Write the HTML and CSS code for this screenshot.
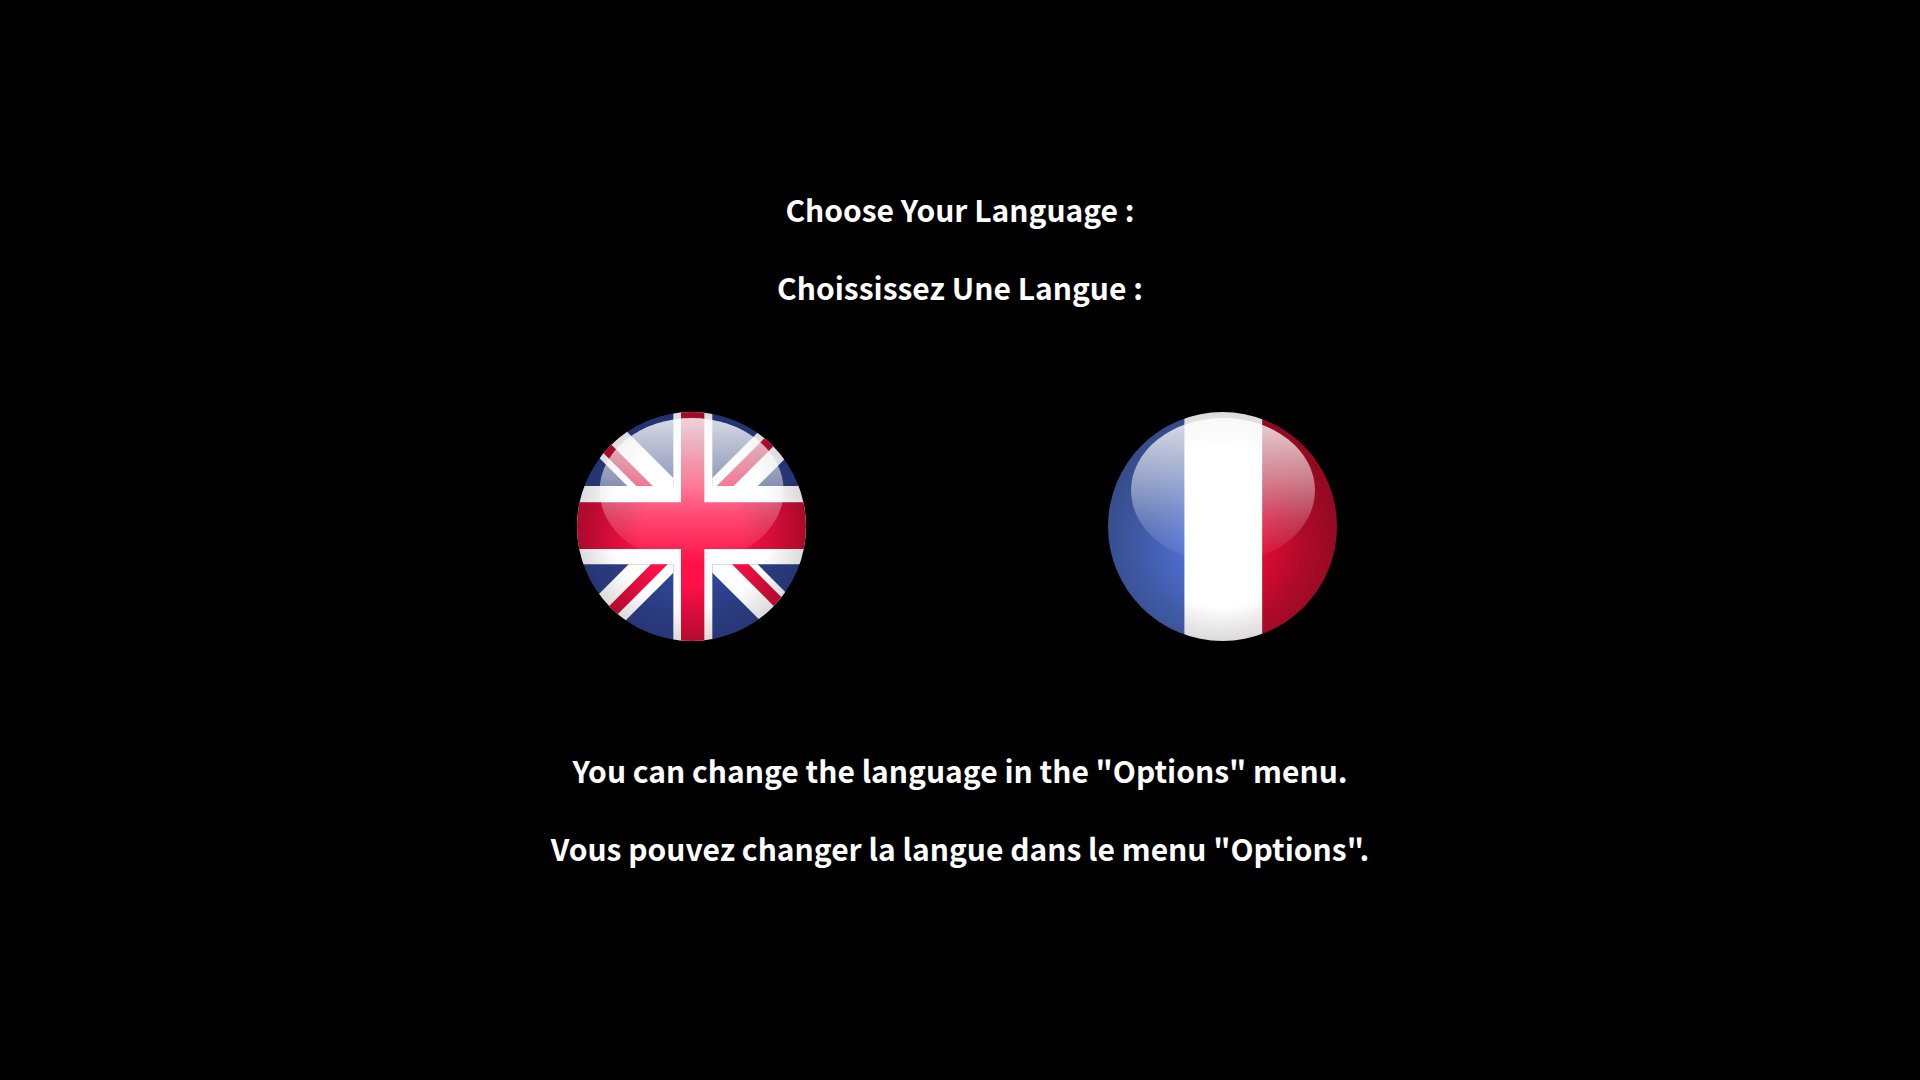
FILE: index.html
```html
<!DOCTYPE html>
<html lang="en">
<head>
<meta charset="utf-8">
<meta name="viewport" content="width=device-width, initial-scale=1">
<title>Choose Your Language</title>
<link rel="stylesheet" href="styles.css">
</head>
<body>
<main class="screen">
  <h1 class="lines">
    <span>Choose Your Language :</span>
    <span lang="fr">Choississez Une Langue :</span>
  </h1>

  <div class="flags">
    <button class="flag" type="button" aria-label="English">
      <svg viewBox="0 0 687 687" aria-hidden="true">
        <defs>
          <clipPath id="disc"><circle cx="343.5" cy="343.5" r="343.5"/></clipPath>
          <radialGradient id="uk-red" gradientUnits="userSpaceOnUse" cx="343" cy="370" r="370">
            <stop offset="0" stop-color="#ff1048"/>
            <stop offset=".4" stop-color="#ff1046"/>
            <stop offset=".7" stop-color="#cf0c38"/>
            <stop offset=".9" stop-color="#ae0a2d"/>
            <stop offset="1" stop-color="#a4092a"/>
          </radialGradient>
          <radialGradient id="uk-blue" gradientUnits="userSpaceOnUse" cx="343" cy="370" r="370">
            <stop offset="0" stop-color="#3450b0"/>
            <stop offset=".4" stop-color="#2f4597"/>
            <stop offset=".75" stop-color="#293979"/>
            <stop offset="1" stop-color="#253272"/>
          </radialGradient>
          <radialGradient id="white" gradientUnits="userSpaceOnUse" cx="343" cy="343" r="344">
            <stop offset="0" stop-color="#fff"/>
            <stop offset=".7" stop-color="#fff"/>
            <stop offset="1" stop-color="#dcdada"/>
          </radialGradient>
          <linearGradient id="gloss" x1="0" y1="0" x2="0" y2="1">
            <stop offset="0" stop-color="#fff" stop-opacity=".82"/>
            <stop offset=".4" stop-color="#fff" stop-opacity=".5"/>
            <stop offset=".7" stop-color="#fff" stop-opacity=".22"/>
            <stop offset="1" stop-color="#fff" stop-opacity=".01"/>
          </linearGradient>
        </defs>
        <g clip-path="url(#disc)">
          <path fill="url(#uk-blue)" d="M0 0H687V687H0z"/>
          <g fill="url(#white)">
            <path d="M289 198 89-2-71 0 151 222H289z"/>
            <path d="M406 198 606-2 764 0 542 222H406z"/>
            <path d="M155 457-67 679 89 682 289 482V457z"/>
            <path d="M542 457 764 679 606 682 406 482V457z"/>
            <path d="M289 0H406V222H687V457H406V687H289V457H0V222H289z"/>
          </g>
          <g fill="url(#uk-red)">
            <path d="M227 222 5 0H-44L178 222z"/>
            <path d="M419 222 641 0H692L470 222z"/>
            <path d="M222 457-8 687H42L272 457z"/>
            <path d="M465 457 695 687H745L515 457z"/>
            <path d="M312 0H382V271H687V411H382V687H312V411H0V271H312z"/>
          </g>
          <ellipse cx="344" cy="235" rx="276" ry="217" fill="url(#gloss)"/>
        </g>
      </svg>
    </button>
    <button class="flag" type="button" aria-label="Français" lang="fr">
      <svg viewBox="0 0 687 687" aria-hidden="true">
        <defs>
          <radialGradient id="fr-blue" gradientUnits="userSpaceOnUse" cx="343" cy="400" r="400">
            <stop offset="0" stop-color="#5577dc"/>
            <stop offset=".28" stop-color="#4f6fd2"/>
            <stop offset=".6" stop-color="#405ba8"/>
            <stop offset=".85" stop-color="#384f90"/>
            <stop offset="1" stop-color="#354a88"/>
          </radialGradient>
          <radialGradient id="fr-red" gradientUnits="userSpaceOnUse" cx="343" cy="400" r="400">
            <stop offset="0" stop-color="#e80c38"/>
            <stop offset=".32" stop-color="#dc0a34"/>
            <stop offset=".6" stop-color="#b00a2a"/>
            <stop offset=".85" stop-color="#960a22"/>
            <stop offset="1" stop-color="#900a20"/>
          </radialGradient>
        </defs>
        <g clip-path="url(#disc)">
          <path fill="url(#fr-blue)" d="M0 0H230V687H0z"/>
          <path fill="url(#white)" d="M229 0H464V687H229z"/>
          <path fill="url(#fr-red)" d="M463 0H687V687H463z"/>
          <ellipse cx="345" cy="235" rx="276" ry="217" fill="url(#gloss)"/>
        </g>
      </svg>
    </button>
  </div>

  <p class="lines">
    <span>You can change the language in the "Options" menu.</span>
    <span lang="fr">Vous pouvez changer la langue dans le menu "Options".</span>
  </p>
</main>
</body>
</html>
```
FILE: styles.css
```css
body {
  margin: 0;
  background: #000;
  color: #fff;
  font-family: "Noto Sans CJK SC", "Noto Sans", sans-serif;
}

.screen {
  display: flex;
  flex-direction: column;
  align-items: center;
  gap: 86px;
  padding: 170px 24px;
}

.lines {
  display: flex;
  flex-direction: column;
  margin: 0;
  font-size: 30px;
  font-weight: 700;
  line-height: 78px;
  text-align: center;
}

.flags {
  display: flex;
  gap: 302px;
  padding: 0 6px 4px 0;
}

.flag {
  width: 229px;
  padding: 0;
  border: 0;
  border-radius: 50%;
  background: none;
  cursor: pointer;
}

.flag svg {
  display: block;
  width: 100%;
}
```
